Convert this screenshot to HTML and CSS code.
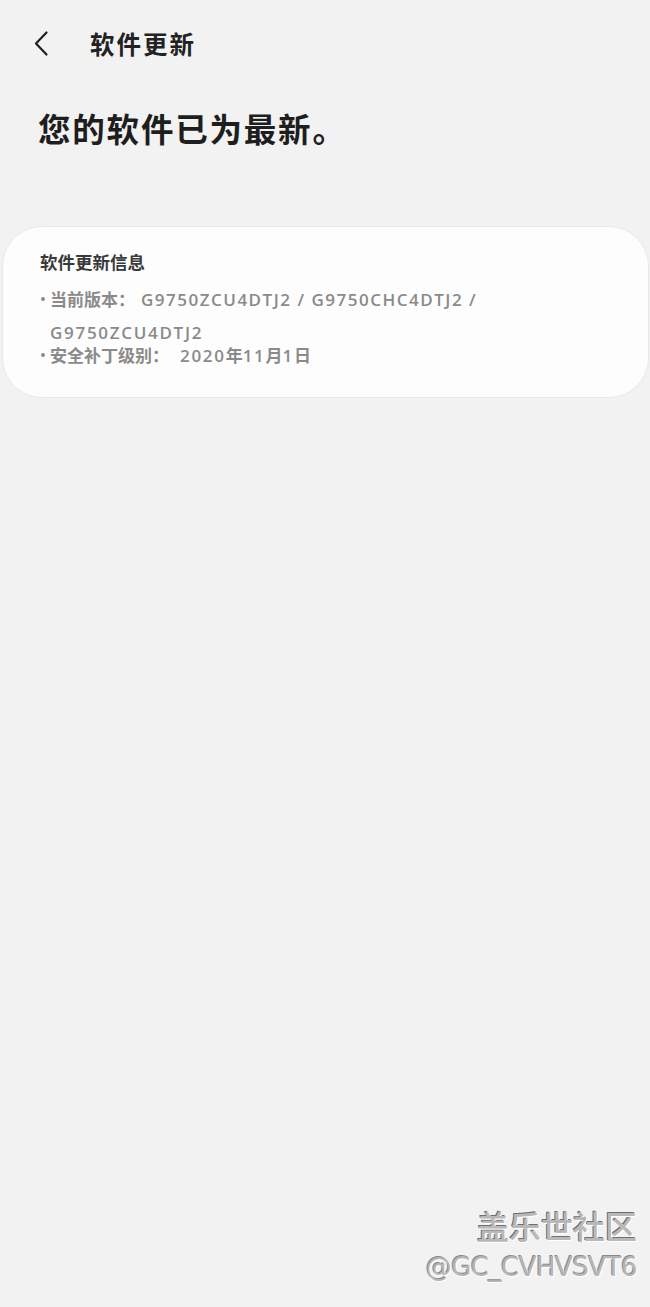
FILE: index.html
```html
<!DOCTYPE html>
<html lang="zh">
<head>
<meta charset="utf-8">
<link rel="stylesheet" href="styles.css">
</head>
<body>
<div class="page">
  <header class="topbar">
    <svg class="back" width="24" height="30" viewBox="0 0 24 30" aria-hidden="true">
      <path d="M14.5 3.5 L4 14.5 L14.5 25.5" fill="none" stroke="#1f1f1f" stroke-width="2.2" stroke-linecap="round" stroke-linejoin="round"/>
    </svg>
    <h1 class="title">软件更新</h1>
  </header>
  <h2 class="status">您的软件已为最新。</h2>
  <section class="card">
    <h3 class="card-title">软件更新信息</h3>
    <ul class="info">
      <li class="item first"><span class="dot"></span><span class="txt">当前版本：<span class="lat lead">G9750ZCU4DTJ2 / G9750CHC4DTJ2 /</span><br><span class="lat wrap">G9750ZCU4DTJ2</span></span></li>
      <li class="item second"><span class="dot"></span><span class="txt">安全补丁级别：<span class="lat gap">2020</span>年<span class="lat">11</span>月<span class="lat">1</span>日</span></li>
    </ul>
  </section>
  <div class="spacer"></div>
  <footer class="watermark">
    <div class="wm-cn">盖乐世社区</div>
    <div class="wm-id">@GC_CVHVSVT6</div>
  </footer>
</div>
</body>
</html>
```

FILE: styles.css
```css
* { box-sizing: border-box; }
html, body { margin: 0; padding: 0; }
body {
  background: #f2f2f2;
  font-family: "Noto Sans CJK SC", "Noto Sans", sans-serif;
  color: #1f1f1f;
}
.page {
  width: 650px;
  height: 1307px;
  display: flex;
  flex-direction: column;
}
.topbar {
  display: flex;
  align-items: center;
  height: 44px;
  margin-top: 22px;
  padding-left: 32px;
}
.back { display: block; }
.title {
  margin: 0 0 0 34px;
  font-size: 24.5px;
  font-weight: 700;
  line-height: 44px;
  color: #222;
  letter-spacing: 2px;
}
.status {
  margin: 38px 0 0 38px;
  font-size: 32.5px;
  font-weight: 700;
  line-height: 48px;
  color: #1e1e1e;
  letter-spacing: 1.8px;
}
.card {
  margin: 74px 1px 0 2px;
  background: #fdfdfd;
  border: 1px solid #e9e9e9;
  border-radius: 40px;
  height: 172px;
  padding: 20px 20px 0 37px;
}
.card-title {
  margin: 0;
  font-size: 17.5px;
  font-weight: 700;
  line-height: 30px;
  color: #3a3a3a;
}
.info {
  list-style: none;
  margin: 6px 0 0 0;
  padding: 0;
  color: #8a8a8a;
  font-size: 17px;
  font-weight: 700;
}
.item { display: flex; line-height: 32px; }
.item.second { margin-top: -10px; }
.dot {
  width: 10px;
  flex: none;
  position: relative;
}
.dot::before {
  content: "";
  position: absolute;
  left: 1px;
  top: 14px;
  width: 4px;
  height: 4px;
  border-radius: 50%;
  background: #8a8a8a;
}
.lat {
  font-family: "Open Sans", "Noto Sans", sans-serif;
  font-weight: 600;
  letter-spacing: 1.7px;
}
.lead { margin-left: 6px; letter-spacing: 1.5px; }
.gap { margin-left: 11px; }
.spacer { flex: 1; }
.watermark {
  align-self: flex-end;
  text-align: right;
  padding-right: 13px;
  margin-bottom: 22px;
}
.wm-cn {
  font-size: 32px;
  line-height: 36px;
  font-weight: 500;
  color: #b8b8b8;
  text-shadow: 1px 1px 0 #ffffff, -1px -1px 0 #6f6f6f;
}
.wm-id {
  font-family: "DejaVu Sans", "Liberation Sans", sans-serif;
  font-size: 26px;
  line-height: 36px;
  margin-top: 6px;
  color: #b5b5b5;
  letter-spacing: -0.5px;
  text-shadow: 1px 1px 0 #fff, -1px -1px 0 #8a8a8a;
}
```
